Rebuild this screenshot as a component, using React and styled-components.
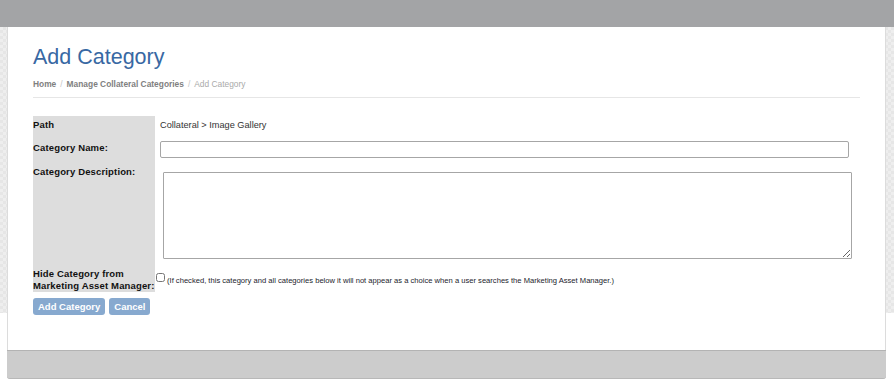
import React from "react";
import styled, { createGlobalStyle } from "styled-components";

const Global = createGlobalStyle`
  html, body { margin: 0; padding: 0; background: #fff; }
  body { font-family: "Liberation Sans", Arial, sans-serif; }
`;

const TopBar = styled.div`
  height: 27px;
  background: #a3a4a6;
`;

const Stage = styled.div`
  padding: 0 8px 11px 7px;
  background:
    linear-gradient(#fff, #fff) 0 286px / 100% 100% no-repeat,
    repeating-conic-gradient(#e6e6e6 0 25%, #eeeeee 0 50%) 0 0 / 6px 6px;
`;

const Panel = styled.div`
  background: #fff;
  border-left: 1px solid #dcdcdc;
  border-right: 1px solid #dcdcdc;
  border-radius: 0 0 3px 3px;
  display: flex;
  flex-direction: column;
`;

const Body = styled.div`
  padding: 17px 25px 35px 25px;
`;

const Title = styled.h1`
  margin: 0;
  font-weight: normal;
  font-size: 21.5px;
  line-height: 26px;
  color: #3868a3;
`;

const Crumbs = styled.div`
  margin-top: 8px;
  font-size: 8.4px;
  line-height: 12px;
  color: #8a8a8a;
  padding-bottom: 7px;
  border-bottom: 1px solid #e6e6e6;
  width: 827px;
`;

const Crumb = styled.span`
  font-weight: ${(p) => (p.$current ? "normal" : "bold")};
  color: ${(p) => (p.$current ? "#aaaaaa" : "#7f7f7f")};
`;

const Sep = styled.span`
  color: #c4c4c4;
  padding: 0 4px;
`;

const Form = styled.div`
  margin-top: 18px;
  display: grid;
  grid-template-columns: 122px 1fr;
`;

const Label = styled.div`
  background: #dddddd;
  font-size: 9.5px;
  font-weight: bold;
  letter-spacing: 0.15px;
  color: #111;
  line-height: 12px;
  height: ${(p) => p.$h}px;
  padding-top: ${(p) => p.$pt}px;
  box-sizing: border-box;
`;

const Cell = styled.div`
  padding-left: ${(p) => p.$pl ?? 5}px;
  padding-top: ${(p) => p.$pt ?? 0}px;
  font-size: 9.2px;
  line-height: 12px;
  color: #333;
  display: flex;
  align-items: flex-start;
`;

const TextInput = styled.input`
  width: 689px;
  height: 17px;
  box-sizing: border-box;
  border: 1px solid #a6a6a6;
  border-radius: 2px;
  padding: 0 3px;
  margin: 0;
  background: #fff;
`;

const TextArea = styled.textarea`
  width: 689px;
  height: 87px;
  box-sizing: border-box;
  border: 1px solid #a6a6a6;
  border-radius: 1px;
  margin: 0 0 0 3px;
  padding: 2px;
  resize: vertical;
  background: #fff;
`;

const Check = styled.input`
  width: 9px;
  height: 9px;
  margin: 0 1px 0 1px;
  flex: none;
  accent-color: #999;
`;

const Note = styled.span`
  font-size: 7.6px;
  line-height: 10px;
  color: #1c1c2c;
  margin-top: 3px;
  margin-left: 1px;
  white-space: nowrap;
`;

const Buttons = styled.div`
  display: flex;
  gap: 4px;
  margin-top: 6px;
`;

const Button = styled.button`
  height: 17px;
  padding: 0 ${(p) => p.$px}px;
  border: none;
  border-radius: 3px;
  background: #87a9cf;
  color: #fff;
  font-family: "Liberation Sans", Arial, sans-serif;
  font-weight: bold;
  font-size: 9.5px;
  line-height: 17px;
  cursor: pointer;
`;

const Footer = styled.div`
  height: 27px;
  background: #cccccc;
  border-top: 1px solid #b3b3b3;
  border-bottom: 1px solid #b8b8b8;
  border-radius: 0 0 3px 3px;
  margin: 0 -1px;
`;

export default function App() {
  return (
    <>
      <Global />
      <TopBar />
      <Stage>
        <Panel>
          <Body>
            <Title>Add Category</Title>
            <Crumbs>
              <Crumb>Home</Crumb>
              <Sep>/</Sep>
              <Crumb>Manage Collateral Categories</Crumb>
              <Sep>/</Sep>
              <Crumb $current>Add Category</Crumb>
            </Crumbs>
            <Form>
              <Label $h={21} $pt={3}>Path</Label>
              <Cell $pt={3}>Collateral &gt; Image Gallery</Cell>

              <Label $h={25} $pt={5}>Category Name:</Label>
              <Cell $pt={4}>
                <TextInput type="text" />
              </Cell>

              <Label $h={100} $pt={4}>Category Description:</Label>
              <Cell $pt={10}>
                <TextArea />
              </Cell>

              <Label $h={30} $pt={6}>
                Hide Category from
                <br />
                Marketing Asset Manager:
              </Label>
              <Cell $pl={0} $pt={11}>
                <Check type="checkbox" />
                <Note>
                  (If checked, this category and all categories below it will not appear as a choice when a user searches the Marketing Asset Manager.)
                </Note>
              </Cell>
            </Form>
            <Buttons>
              <Button $px={5}>Add Category</Button>
              <Button $px={5}>Cancel</Button>
            </Buttons>
          </Body>
          <Footer />
        </Panel>
      </Stage>
    </>
  );
}
